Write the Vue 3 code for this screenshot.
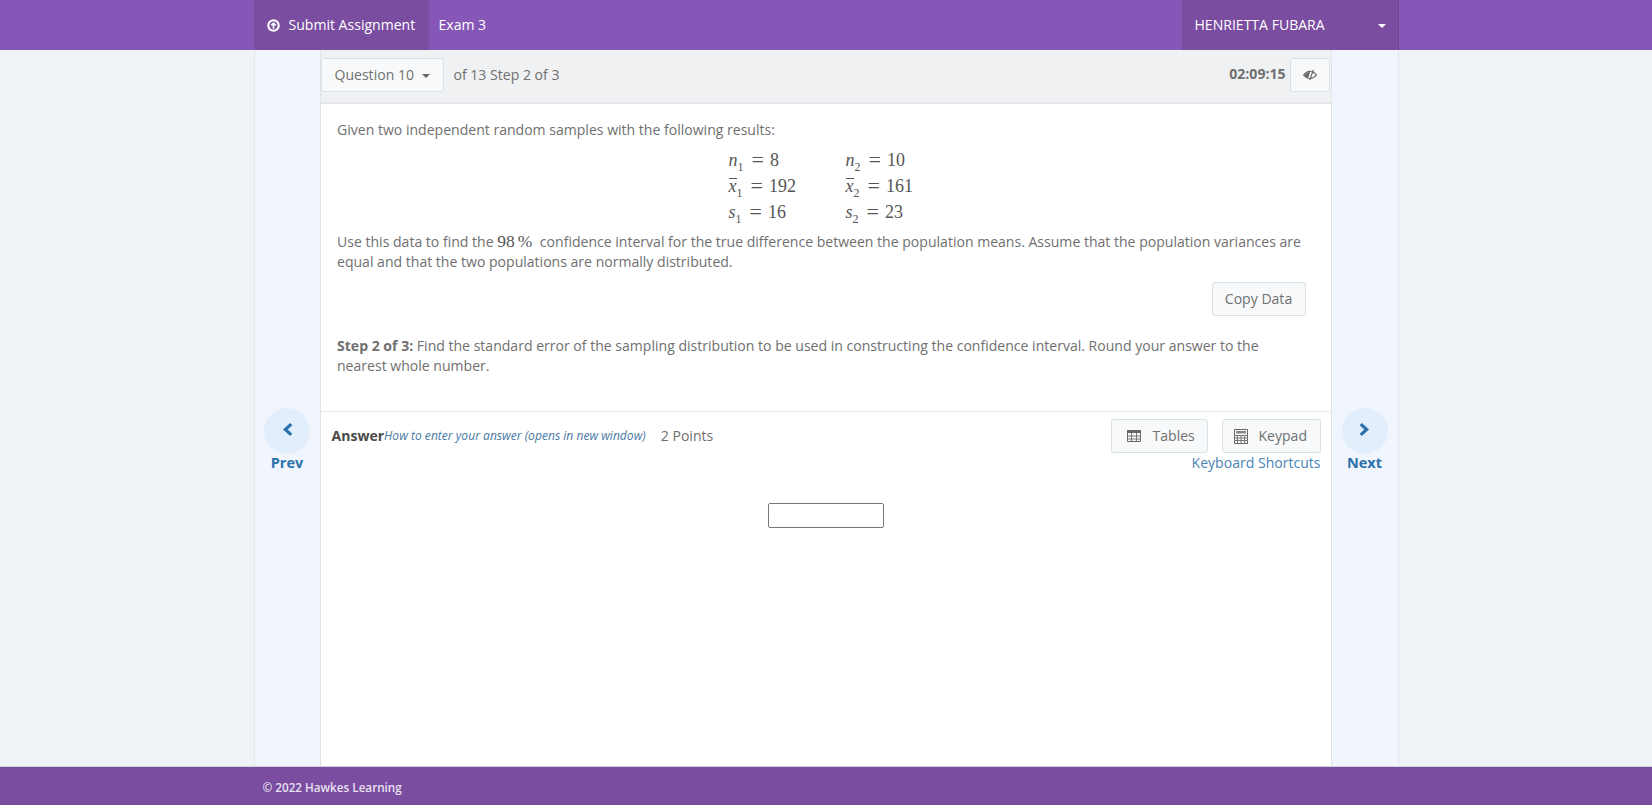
<script setup>
const rows = [
  [{ v: 'n', sub: '1', val: '8' }, { v: 'n', sub: '2', val: '10' }],
  [{ v: 'x', bar: true, sub: '1', val: '192' }, { v: 'x', bar: true, sub: '2', val: '161' }],
  [{ v: 's', sub: '1', val: '16' }, { v: 's', sub: '2', val: '23' }],
]
</script>

<template>
  <div class="page">
    <!-- top bar -->
    <header class="topbar">
      <div class="wrap topbar-inner">
        <a class="submit">
          <svg class="submit-icon" viewBox="0 0 16 16" width="13" height="13">
            <circle cx="8" cy="8" r="6.4" fill="none" stroke="#fff" stroke-width="2.6" />
            <path d="M8 12V5.2M5.3 7.8L8 5l2.7 2.8" fill="none" stroke="#fff" stroke-width="2" />
          </svg>
          Submit Assignment
        </a>
        <span class="exam">Exam 3</span>
        <div class="user">
          <span>HENRIETTA FUBARA</span>
          <i class="caret"></i>
        </div>
      </div>
    </header>

    <div class="wrap body">
      <!-- prev -->
      <aside class="side">
        <div class="circle">
          <svg viewBox="0 0 12 14" width="13" height="15">
            <path d="M9.5 2L4 7l5.5 5" fill="none" stroke="#2a71ab" stroke-width="3" />
          </svg>
        </div>
        <span class="side-label">Prev</span>
      </aside>

      <main class="main">
        <div class="qbar">
          <button class="btn qbtn">Question 10 <i class="caret dark"></i></button>
          <span class="qof">of 13 Step 2 of 3</span>
          <span class="timer">02:09:15</span>
          <button class="btn eye">
            <svg viewBox="0 0 18 14" width="16" height="12">
              <path d="M1.5 7C4 3.8 6.5 2.8 9 2.8S14 3.8 16.5 7C14 10.2 11.5 11.2 9 11.2S4 10.2 1.5 7z" fill="none" stroke="#666" stroke-width="1.3" />
              <path d="M2.5 7c1.5-2 4-3.4 6.6-3.6L6.8 10.6C5.2 10.2 3.6 8.8 2.5 7z" fill="#666" />
              <path d="M10.6 3L8 11" stroke="#f7f9fa" stroke-width="1.4" />
              <path d="M13 1.2L8.6 12.8" stroke="#666" stroke-width="1.4" />
            </svg>
          </button>
        </div>

        <section class="question">
          <p>Given two independent random samples with the following results:</p>
          <div class="data">
            <div v-for="(row, i) in rows" :key="i" class="data-row">
              <div v-for="(c, j) in row" :key="j" class="cell">
                <span class="var" :class="{ bar: c.bar }">{{ c.v }}</span><sub>{{ c.sub }}</sub>
                <span class="eq">=</span>
                <span>{{ c.val }}</span>
              </div>
            </div>
          </div>
          <p>Use this data to find the <span class="pct">98 %</span> confidence interval for the true difference between the population means. Assume that the population variances are equal and that the two populations are normally distributed.</p>
          <div class="copy-row">
            <button class="btn copy">Copy Data</button>
          </div>
          <p class="step"><b>Step 2 of 3:</b> Find the standard error of the sampling distribution to be used in constructing the confidence interval. Round your answer to the nearest whole number.</p>
        </section>

        <section class="answer">
          <div class="answer-head">
            <div class="answer-left">
              <b class="answer-title">Answer</b>
              <a class="howto">How to enter your answer (opens in new window)</a>
              <span class="points">2 Points</span>
            </div>
            <div class="answer-right">
              <div class="tools">
                <button class="btn tool tables">
                  <svg viewBox="0 0 14 12" width="14" height="12">
                    <path d="M.5.5h13v11H.5z" fill="none" stroke="#666" />
                    <path d="M0 0h14v3H0z" fill="#666" />
                    <path d="M0 6h14M0 9h14M4.5 3v9M9.5 3v9" stroke="#777" />
                  </svg>
                  Tables
                </button>
                <button class="btn tool keypad">
                  <svg viewBox="0 0 14 15" width="14" height="15">
                    <path d="M.5.5h13v14H.5z" fill="none" stroke="#666" />
                    <path d="M2 2h10v2.5H2z" fill="#888" />
                    <path d="M0 6.5h14M0 9h14M0 11.5h14M3.5 6v9M7 6v9M10.5 6v9" stroke="#777" />
                  </svg>
                  Keypad
                </button>
              </div>
              <a class="shortcuts">Keyboard Shortcuts</a>
            </div>
          </div>
          <div class="input-row">
            <input class="answer-input" type="text" />
          </div>
        </section>
      </main>

      <!-- next -->
      <aside class="side right">
        <div class="circle">
          <svg viewBox="0 0 12 14" width="13" height="15">
            <path d="M2.5 2L8 7l-5.5 5" fill="none" stroke="#2a71ab" stroke-width="3" />
          </svg>
        </div>
        <span class="side-label">Next</span>
      </aside>
    </div>

    <footer class="footer">
      <div class="wrap footer-inner">© 2022 Hawkes Learning</div>
    </footer>
  </div>
</template>

<style>
body {
  background: #f0f3f6;
}
</style>

<style scoped>
.page {
  display: flex;
  flex-direction: column;
  height: 805px;
  font-family: "Open Sans", sans-serif;
  font-size: 14.05px;
  line-height: 20px;
  color: #707070;
  overflow: hidden;
}
.wrap {
  width: 1145px;
  margin: 0 auto;
  box-sizing: border-box;
}
.topbar {
  height: 50px;
  background: #8657b6;
  color: #fff;
  flex: none;
}
.topbar-inner {
  display: flex;
  align-items: center;
  height: 100%;
}
.submit {
  display: flex;
  align-items: center;
  gap: 9px;
  height: 100%;
  padding: 0 13px;
  background: #7a4da0;
  width: 175px;
  box-sizing: border-box;
  border-radius: 0 0 2px 2px;
  white-space: nowrap;
}
.exam {
  margin-left: 10px;
}
.user {
  margin-left: auto;
  display: flex;
  align-items: center;
  justify-content: space-between;
  width: 217px;
  height: 100%;
  box-sizing: border-box;
  padding: 0 12px 0 13px;
  background: #7a4da0;
  border-right: 1px solid #6f4594;
}
.caret {
  display: inline-block;
  width: 0;
  height: 0;
  border-left: 4px solid transparent;
  border-right: 4px solid transparent;
  border-top: 4px solid #fff;
  margin-top: 2px;
}
.caret.dark {
  border-top-color: #666;
  margin-left: 5px;
  vertical-align: middle;
}
.body {
  flex: 1;
  display: flex;
  border-left: 1px solid #e3e7ec;
  border-right: 1px solid #e3e7ec;
  background: #f1f6fe;
  min-height: 0;
}
.side {
  width: 65px;
  flex: none;
  display: flex;
  flex-direction: column;
  align-items: center;
  padding-top: 358px;
  box-sizing: border-box;
}
.side.right {
  width: 66px;
}
.circle {
  width: 46px;
  height: 46px;
  border-radius: 50%;
  background: #e3eefc;
  display: flex;
  align-items: center;
  justify-content: center;
  padding-bottom: 3px;
  box-sizing: border-box;
  margin-bottom: -1px;
}
.side-label {
  font-weight: 700;
  font-size: 14.5px;
  color: #2a71ab;
}
.main {
  flex: 1;
  min-width: 0;
  background: #fff;
  border-left: 1px solid #dfe3e8;
  border-right: 1px solid #dfe3e8;
  display: flex;
  flex-direction: column;
}
.qbar {
  height: 54px;
  flex: none;
  box-sizing: border-box;
  background: #eff1f3;
  border-bottom: 2px solid #e4e6e9;
  display: flex;
  align-items: flex-start;
  padding-top: 8px;
  padding-right: 1px;
}
.btn {
  font-family: inherit;
  font-size: 14.05px;
  line-height: 20px;
  color: #707070;
  background: #f7f9fa;
  border: 1px solid #d8e1e6;
  border-radius: 3px;
  height: 34px;
  box-sizing: border-box;
  padding: 0 12px;
  display: inline-flex;
  align-items: center;
}
.qbtn {
  width: 123px;
  padding-left: 13px;
  white-space: nowrap;
  gap: 3px;
}
.qof {
  margin-left: 10px;
  line-height: 33px;
}
.timer {
  margin-left: auto;
  font-weight: 700;
  line-height: 32px;
  margin-right: 4px;
}
.eye {
  width: 40px;
  padding: 0;
  justify-content: center;
}
.question {
  padding: 16px 26px 0 16.5px;
  height: 308px;
  box-sizing: border-box;
  border-bottom: 1px solid #e6e8ea;
}
p {
  margin: 0;
}
.data {
  font-family: "Liberation Serif", serif;
  font-size: 18px;
  color: #555;
  padding-left: 391.5px;
  margin: 7px 0 6px;
}
.data-row {
  display: flex;
  height: 26px;
  align-items: center;
}
.cell {
  width: 117px;
  white-space: nowrap;
}
.var {
  font-style: italic;
  position: relative;
}
/* the bar over x-bar, text-decoration sits too high */
.var.bar::before {
  content: "";
  position: absolute;
  left: 0;
  right: 0;
  top: 2px;
  border-top: 1px solid #555;
}
sub {
  font-size: 12px;
  line-height: 0;
}
.eq {
  font-size: 22px;
  line-height: 0;
  margin: 0 6px 0 8px;
  vertical-align: -1px;
}
.pct {
  font-family: "Liberation Serif", serif;
  font-size: 17.5px;
  word-spacing: -1.5px;
  color: #555;
  margin-right: 4px;
}
.copy-row {
  display: flex;
  justify-content: flex-end;
  margin-top: 10px;
}
.copy {
  width: 94px;
  justify-content: center;
  padding: 0;
  margin-right: -1px;
}
.step {
  margin-top: 20px;
}
.answer {
  flex: 1;
  padding: 7px 10px 0 11px;
}
.answer-head {
  display: flex;
  justify-content: space-between;
  align-items: flex-start;
}
.answer-left {
  display: flex;
  align-items: center;
  height: 34px;
}
.answer-title {
  color: #4a4a4a;
}
.howto {
  font-style: italic;
  font-size: 12.1px;
  color: #4a7aa5;
}
.points {
  margin-left: 15px;
}
.answer-right {
  display: flex;
  flex-direction: column;
  align-items: flex-end;
}
.tools {
  display: flex;
  gap: 14px;
}
.tool {
  gap: 12px;
  padding: 0 0 0 15px;
}
.tables {
  width: 97px;
}
.keypad {
  width: 99px;
  padding-left: 11px;
  gap: 11px;
}
.shortcuts {
  color: #4a85b5;
}
.input-row {
  display: flex;
  justify-content: center;
  margin-top: 30px;
}
.answer-input {
  width: 116px;
  height: 25px;
  box-sizing: border-box;
  border: 1px solid #777;
  border-radius: 2px;
  background: #fff;
}
.footer {
  flex: none;
  height: 39px;
  background: #7a4da0;
  border-top: 1px solid #cfcfd6;
  box-sizing: border-box;
  color: #e8e0f0;
}
.footer-inner {
  padding: 11px 9px;
  font-size: 11.7px;
  font-weight: 600;
  line-height: 18px;
}
</style>
